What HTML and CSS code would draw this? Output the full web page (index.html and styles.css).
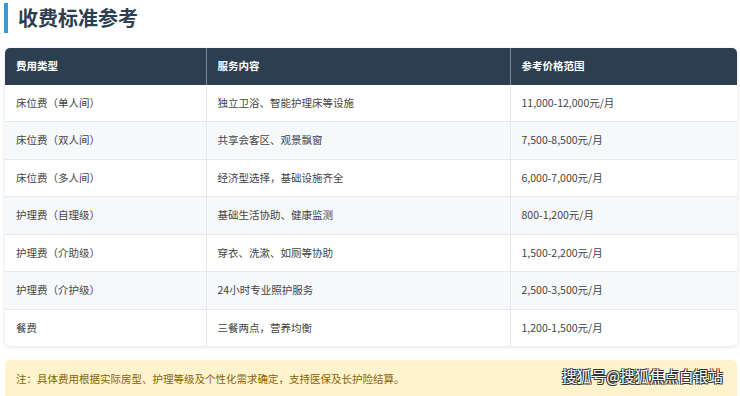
FILE: index.html
```html
<!DOCTYPE html>
<html lang="zh-CN">
<head>
    <meta charset="UTF-8">
    <meta name="viewport" content="width=device-width, initial-scale=1.0">
    <title>收费标准参考</title>
    <link rel="stylesheet" href="styles.css">
</head>
<body>
    <div class="page">
        <h2 class="section-title">收费标准参考</h2>

        <div class="table-wrap">
            <table class="fee-table">
                <colgroup>
                    <col class="col-type">
                    <col class="col-service">
                    <col class="col-price">
                </colgroup>
                <thead>
                    <tr>
                        <th>费用类型</th>
                        <th>服务内容</th>
                        <th>参考价格范围</th>
                    </tr>
                </thead>
                <tbody>
                    <tr>
                        <td>床位费（单人间）</td>
                        <td>独立卫浴、智能护理床等设施</td>
                        <td>11,000-12,000元/月</td>
                    </tr>
                    <tr>
                        <td>床位费（双人间）</td>
                        <td>共享会客区、观景飘窗</td>
                        <td>7,500-8,500元/月</td>
                    </tr>
                    <tr>
                        <td>床位费（多人间）</td>
                        <td>经济型选择，基础设施齐全</td>
                        <td>6,000-7,000元/月</td>
                    </tr>
                    <tr>
                        <td>护理费（自理级）</td>
                        <td>基础生活协助、健康监测</td>
                        <td>800-1,200元/月</td>
                    </tr>
                    <tr>
                        <td>护理费（介助级）</td>
                        <td>穿衣、洗漱、如厕等协助</td>
                        <td>1,500-2,200元/月</td>
                    </tr>
                    <tr>
                        <td>护理费（介护级）</td>
                        <td>24小时专业照护服务</td>
                        <td>2,500-3,500元/月</td>
                    </tr>
                    <tr>
                        <td>餐费</td>
                        <td>三餐两点，营养均衡</td>
                        <td>1,200-1,500元/月</td>
                    </tr>
                </tbody>
            </table>
        </div>

        <div class="note">
            注：具体费用根据实际房型、护理等级及个性化需求确定，支持医保及长护险结算。
            <span class="watermark">搜狐号@搜狐焦点白银站</span>
        </div>
    </div>
</body>
</html>
```

FILE: styles.css
```css
body {
    margin: 0;
    background: #ffffff;
    font-family: "Noto Sans CJK SC", "Noto Sans", sans-serif;
    color: #333333;
}

.page {
    padding: 3px 3px 0 5px;
}

.section-title {
    margin: 0 0 15px -1px;
    padding-left: 10px;
    border-left: 4px solid #3498db;
    font-size: 20px;
    font-weight: 700;
    line-height: 30px;
    color: #2c3e50;
}

.table-wrap {
    border-radius: 5px;
    overflow: hidden;
    box-shadow: 0 1px 4px rgba(0, 0, 0, 0.12);
}

.fee-table {
    width: 100%;
    table-layout: fixed;
    border-collapse: collapse;
    font-size: 10.5px;
}

.col-type {
    width: 201px;
}

.col-service {
    width: 304px;
}

.fee-table th,
.fee-table td {
    text-align: left;
    padding: 11px 11px;
    line-height: 14.5px;
    border-right: 1px solid #e6e8eb;
}

.fee-table th:last-child,
.fee-table td:last-child {
    border-right: none;
}

.fee-table th {
    background: #2c3e50;
    color: #ffffff;
    font-weight: 700;
    border-right-color: #7b8794;
}

.fee-table td {
    color: #444444;
    border-bottom: 1px solid #e6e8eb;
}

.fee-table tbody tr:nth-child(even) td {
    background: #f7f8fa;
}

.fee-table tbody tr:last-child td {
    border-bottom: none;
}

.note {
    position: relative;
    margin-top: 14px;
    padding: 12px 11px 20px;
    background: #fff3cd;
    border-radius: 5px;
    font-size: 10.5px;
    line-height: 14px;
    color: #856404;
}

.watermark {
    position: absolute;
    right: 14px;
    top: 9px;
    font-size: 14.5px;
    font-weight: 400;
    letter-spacing: 0.2px;
    color: #ffffff;
    text-shadow: -1px -1px 0 #333, 1px -1px 0 #333, -1px 1px 0 #333, 1px 1px 0 #333;
}
```
